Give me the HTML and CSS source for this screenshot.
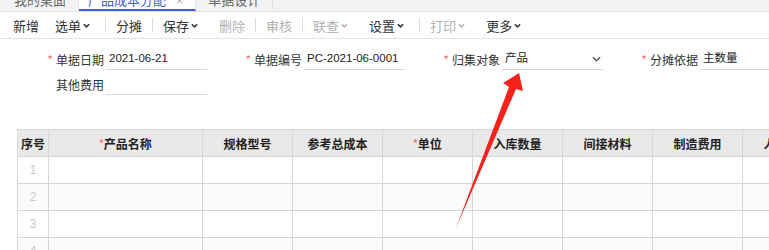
FILE: index.html
```html
<!DOCTYPE html>
<html lang="zh-CN">
<head>
    <meta charset="UTF-8">
    <title>产品成本分配</title>
    <link rel="stylesheet" href="styles.css">
</head>
<body>
    <div class="tabbar">
        <div class="tab">我的桌面</div>
        <div class="tab active">产品成本分配 <span class="tab-close">×</span></div>
        <div class="tab">单据设计</div>
    </div>

    <div class="toolbar">
        <span class="tb-btn">新增</span>
        <span class="tb-btn dd">选单<svg class="chev" viewBox="0 0 8 5"><polyline points="1,1 4,4 7,1"/></svg></span>
        <span class="tb-sep"></span>
        <span class="tb-btn">分摊</span>
        <span class="tb-sep"></span>
        <span class="tb-btn dd">保存<svg class="chev" viewBox="0 0 8 5"><polyline points="1,1 4,4 7,1"/></svg></span>
        <span class="tb-btn off">删除</span>
        <span class="tb-sep"></span>
        <span class="tb-btn off">审核</span>
        <span class="tb-sep"></span>
        <span class="tb-btn dd off">联查<svg class="chev" viewBox="0 0 8 5"><polyline points="1,1 4,4 7,1"/></svg></span>
        <span class="tb-btn dd">设置<svg class="chev" viewBox="0 0 8 5"><polyline points="1,1 4,4 7,1"/></svg></span>
        <span class="tb-sep"></span>
        <span class="tb-btn dd off">打印<svg class="chev" viewBox="0 0 8 5"><polyline points="1,1 4,4 7,1"/></svg></span>
        <span class="tb-btn dd">更多<svg class="chev" viewBox="0 0 8 5"><polyline points="1,1 4,4 7,1"/></svg></span>
    </div>

    <div class="form">
        <div class="field">
            <span class="req">*</span><label>单据日期</label>
            <div class="input">2021-06-21</div>
        </div>
        <div class="field">
            <span class="req">*</span><label>单据编号</label>
            <div class="input">PC-2021-06-0001</div>
        </div>
        <div class="field">
            <span class="req">*</span><label>归集对象</label>
            <div class="input select">产品<svg class="sel-chev" viewBox="0 0 10 6"><polyline points="1,1 5,5 9,1"/></svg></div>
        </div>
        <div class="field">
            <span class="req">*</span><label>分摊依据</label>
            <div class="input wide">主数量</div>
        </div>
        <div class="field">
            <span class="req"></span><label>其他费用</label>
            <div class="input"></div>
        </div>
    </div>

    <table class="grid">
        <colgroup>
            <col style="width:31px">
            <col style="width:154px">
            <col style="width:90px">
            <col style="width:90px">
            <col style="width:90px">
            <col style="width:90px">
            <col style="width:90px">
            <col style="width:90px">
            <col style="width:90px">
        </colgroup>
        <thead>
            <tr>
                <th>序号</th>
                <th><span class="star">*</span>产品名称</th>
                <th>规格型号</th>
                <th>参考总成本</th>
                <th><span class="star">*</span>单位</th>
                <th>入库数量</th>
                <th>间接材料</th>
                <th>制造费用</th>
                <th>人工费用</th>
            </tr>
        </thead>
        <tbody>
            <tr><td class="num">1</td><td></td><td></td><td></td><td></td><td></td><td></td><td></td><td></td></tr>
            <tr><td class="num">2</td><td></td><td></td><td></td><td></td><td></td><td></td><td></td><td></td></tr>
            <tr><td class="num">3</td><td></td><td></td><td></td><td></td><td></td><td></td><td></td><td></td></tr>
            <tr><td class="num">4</td><td></td><td></td><td></td><td></td><td></td><td></td><td></td><td></td></tr>
        </tbody>
    </table>

    <!-- red annotation arrow drawn over the page -->
    <svg class="arrow" viewBox="0 0 769 250">
        <polygon points="456,228 509,87 503,83 519,73 523,91 516,89"/>
    </svg>
</body>
</html>
```

FILE: styles.css
```css
body {
    margin: 0;
    width: 769px;
    height: 250px;
    overflow: hidden;
    background: #fff;
    color: #333;
    font-family: "Liberation Sans", "Noto Sans CJK SC", sans-serif;
    position: relative;
}
.tabbar {
    height: 11px;
    display: flex;
    align-items: flex-end;
    overflow: hidden;
    background: #f3f3f3;
    border-bottom: 1px solid #e3e3e3;
    padding-left: 2px;
}
.tab {
    flex: none;
    padding: 0 12px;
    font-size: 13px;
    line-height: 16px;
    color: #666;
    border-bottom: 2px solid transparent;
    border-right: 1px solid #e3e3e3;
}
.tab.active {
    background: #fff;
    color: #3b5bdb;
    border-bottom-color: #3d5ee6;
    padding: 0 12px 0 9px;
}
.tab-close {
    color: #aaa;
    margin-left: 6px;
}
.toolbar {
    height: 26px;
    display: flex;
    align-items: center;
    padding-left: 5px;
    border-bottom: 1px solid #e2e2e2;
    font-size: 13px;
}
.tb-btn {
    display: flex;
    align-items: center;
    padding: 0 8px;
    color: #333;
}
.tb-btn.off {
    color: #b3b3b3;
}
.chev {
    width: 7px;
    height: 5px;
    margin: 0 5px 0 2px;
    fill: none;
    stroke: currentColor;
    stroke-width: 1.8;
}
.tb-sep {
    width: 1px;
    height: 14px;
    margin: 0 2px;
    background: #dcdcdc;
}
.form {
    display: grid;
    grid-template-columns: repeat(4, 198px);
    row-gap: 3px;
    padding: 9px 0 0 48px;
    font-size: 12px;
}
.field {
    display: flex;
    align-items: center;
    height: 22px;
}
.req {
    width: 8px;
    color: #f05a5a;
    font-size: 11px;
    align-self: flex-start;
    padding-top: 5px;
}
.field label {
    width: 48px;
    color: #333;
}
.input {
    width: 98px;
    height: 21px;
    margin-left: 2px;
    padding-left: 3px;
    line-height: 21px;
    border-bottom: 1px solid #d9d9d9;
    color: #222;
    font-size: 11.5px;
    white-space: nowrap;
    display: flex;
    align-items: center;
}
.input.select {
    justify-content: space-between;
}
.sel-chev {
    width: 9px;
    height: 6px;
    margin-right: 2px;
    fill: none;
    stroke: #555;
    stroke-width: 1.6;
}
.input.wide {
    width: 120px;
}
.grid {
    margin: 34px 0 0 17px;
    border-collapse: collapse;
    table-layout: fixed;
    width: 815px;
    font-size: 12px;
}
.grid th, .grid td {
    border: 1px solid #d6d6d6;
    height: 26px;
    padding: 0;
    text-align: center;
    white-space: nowrap;
    overflow: hidden;
}
.grid th {
    background: #e9e9e9;
    color: #222;
    font-weight: bold;
}
.grid tbody tr:nth-child(even) td {
    background: #fafafa;
}
.star {
    color: #f05a5a;
    font-weight: normal;
    font-size: 11px;
    vertical-align: 2px;
}
.grid td.num {
    color: #c8c8c8;
}
.arrow {
    position: absolute;
    left: 0;
    top: 0;
    width: 769px;
    height: 250px;
    pointer-events: none;
}
.arrow polygon {
    fill: #f5221b;
}
```
